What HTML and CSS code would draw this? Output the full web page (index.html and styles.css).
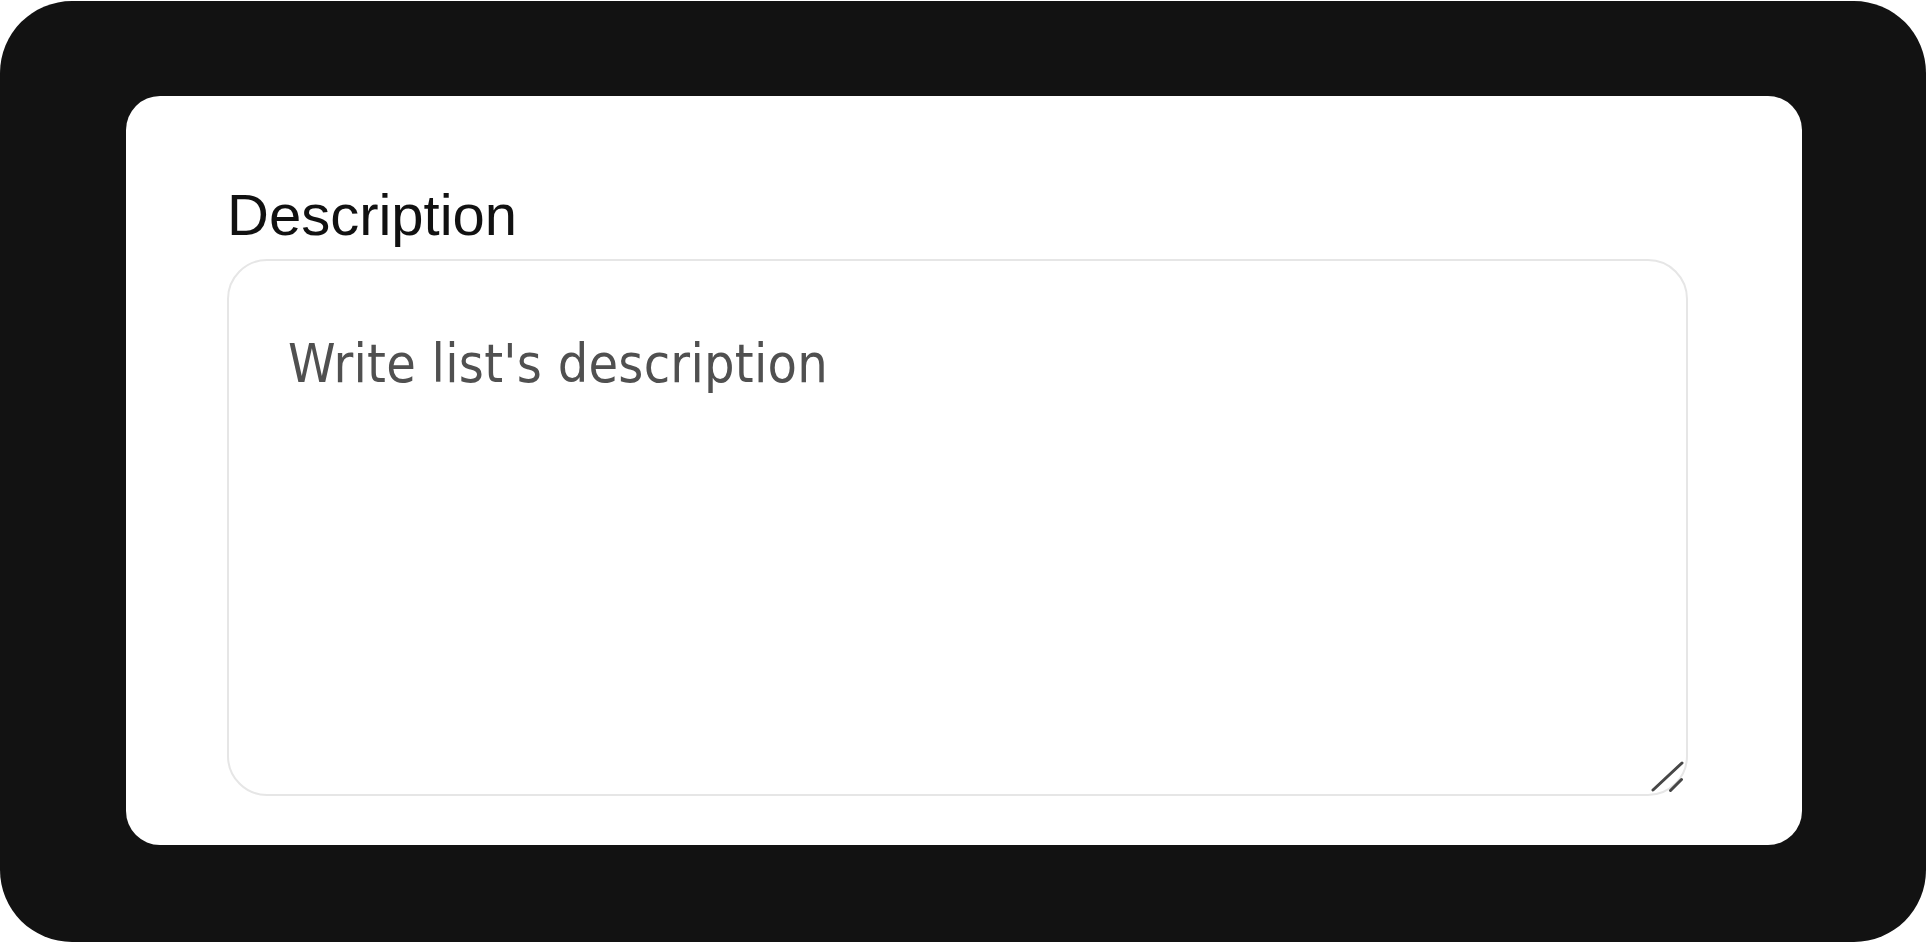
FILE: index.html
```html
<!DOCTYPE html>
<html lang="en">
<head>
<meta charset="utf-8">
<title>Description</title>
<link rel="stylesheet" href="styles.css">
</head>
<body>
<div class="frame">
  <div class="card">
    <label class="label" for="desc">Description</label>
    <div class="field">
      <textarea id="desc" class="input" placeholder="Write list's description"></textarea>
      <svg class="grip" width="40" height="40" viewBox="0 0 40 40" aria-hidden="true">
        <path d="M5 34 L34 7 M22.5 34.5 L33.5 23.5" stroke="#474747" stroke-width="3" stroke-linecap="round" fill="none"/>
      </svg>
    </div>
  </div>
</div>
</body>
</html>
```
FILE: styles.css
```css
html, body {
  margin: 0;
  padding: 0;
  background: #ffffff;
}

body {
  width: 1926px;
  height: 943px;
  overflow: hidden;
}

.frame {
  box-sizing: border-box;
  margin-top: 1px;
  width: 1926px;
  height: 941px;
  background: #121212;
  border-radius: 72px;
  padding: 95px 124px 97px 126px;
}

.card {
  box-sizing: border-box;
  height: 100%;
  background: #ffffff;
  border-radius: 34px;
  padding: 90px 114px 49px 101px;
  display: flex;
  flex-direction: column;
}

.label {
  display: block;
  font-family: "Liberation Sans", Arial, sans-serif;
  font-size: 58px;
  line-height: 58px;
  color: #111111;
  margin-bottom: 15px;
}

.field {
  position: relative;
  flex: 1;
}

.input {
  display: block;
  box-sizing: border-box;
  width: 100%;
  height: 100%;
  margin: 0;
  border: 2px solid #e6e6e6;
  border-radius: 40px;
  padding: 71px 59px;
  font-family: "DejaVu Sans Condensed", "DejaVu Sans", sans-serif;
  font-stretch: semi-condensed;
  font-size: 53.5px;
  letter-spacing: 0.25px;
  color: #222222;
  background: #ffffff;
  resize: none;
  outline: none;
}

.input::placeholder {
  color: #505050;
  opacity: 1;
}

.grip {
  position: absolute;
  right: 0;
  bottom: 0;
}
```
